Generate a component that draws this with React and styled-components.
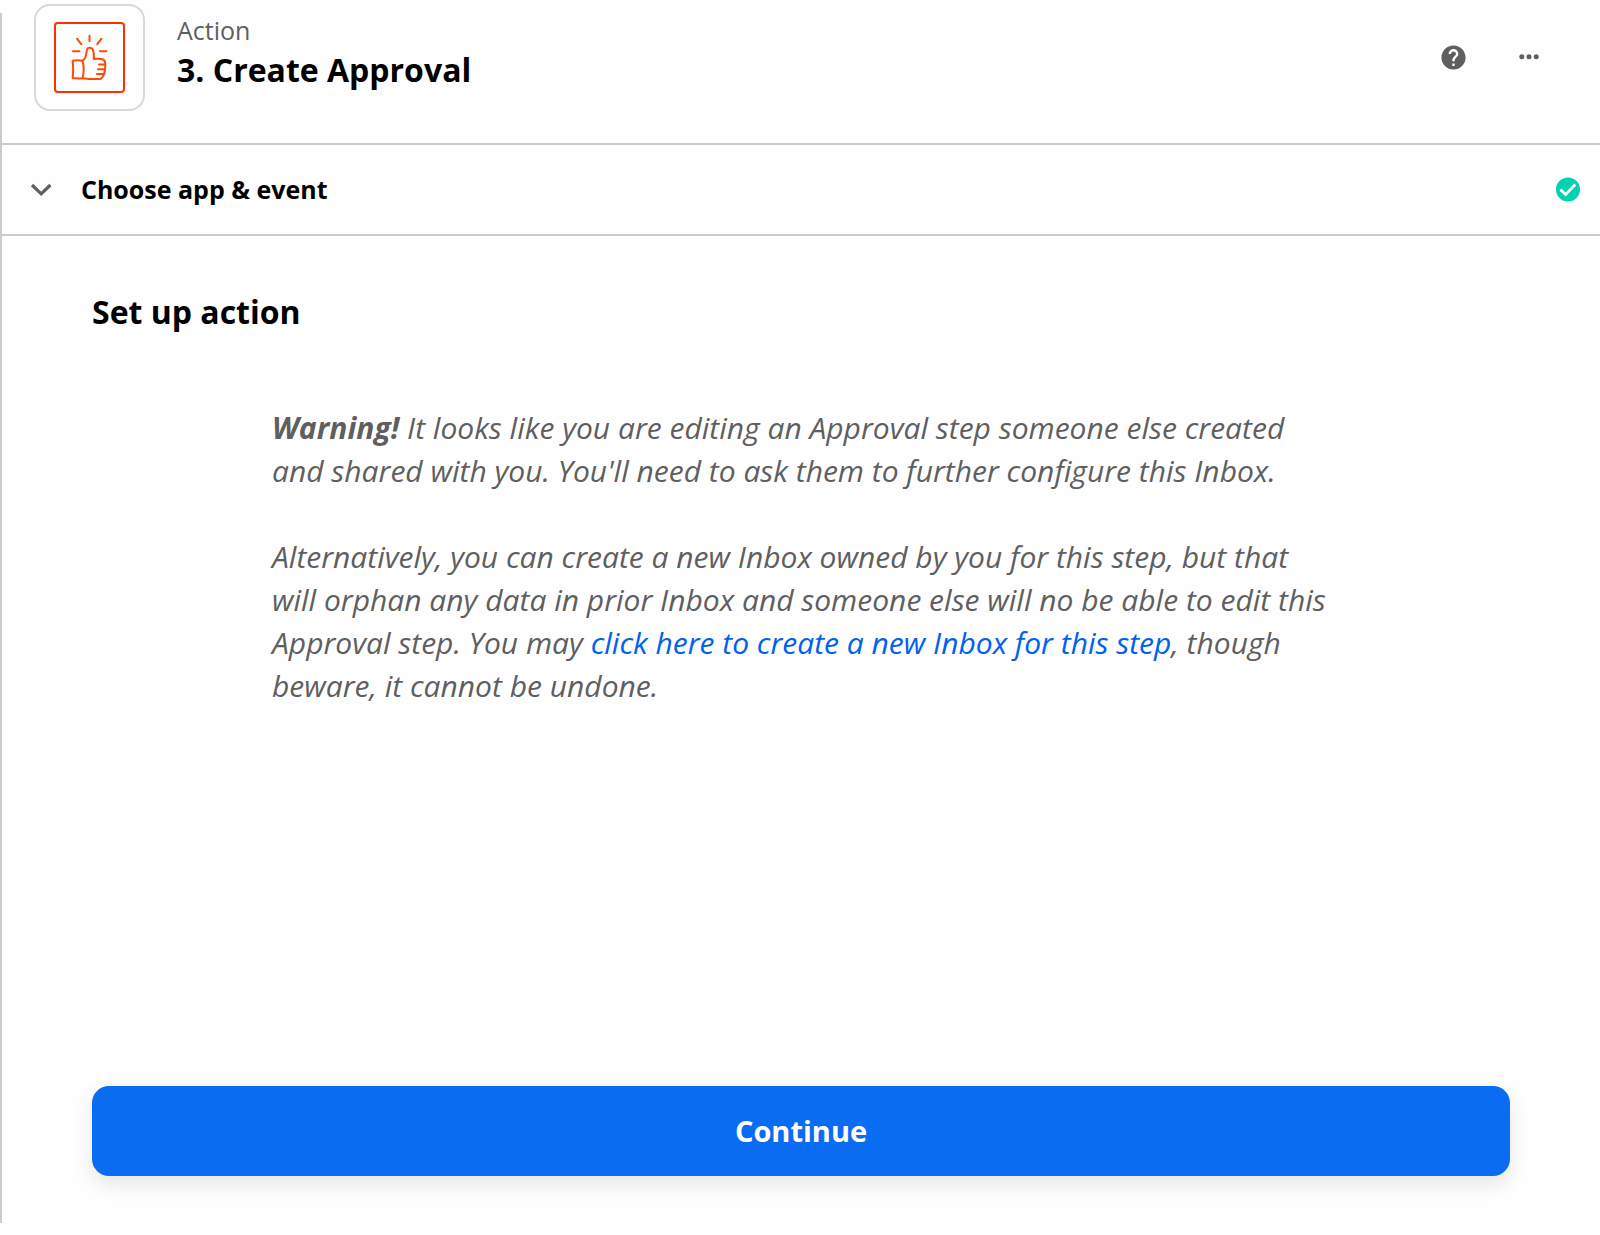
import React, { useState } from "react";
import styled, { createGlobalStyle } from "styled-components";

const colors = {
  black: "#000000",
  gray: "#5f5f5f",
  line: "#cccccc",
  red: "#ff3000",
  orange: "#ff4a00",
  blue: "#0a6cf1",
  link: "#0060f0",
  green: "#00d1b0",
};

const GlobalStyle = createGlobalStyle`
  * {
    box-sizing: border-box;
  }
  body {
    margin: 0;
    background-color: #fefefe;
    color: ${colors.black};
    font-family: "Open Sans", "Noto Sans", sans-serif;
  }
`;

const Panel = styled.div`
  display: flex;
  flex-direction: column;
  min-height: 100vh;
  padding-left: 2px;
  background: linear-gradient(${colors.line}, ${colors.line}) no-repeat;
  background-position: 0 13px;
  background-size: 2px calc(100% - 25px);
`;

const Header = styled.header`
  display: flex;
  align-items: flex-start;
  padding: 4px 50px 32px 32px;
  border-bottom: 2px solid ${colors.line};
`;

const AppIcon = styled.div`
  display: flex;
  align-items: center;
  justify-content: center;
  width: 111px;
  height: 107px;
  border: 2px solid #d8d8d8;
  border-radius: 16px;
`;

const Titles = styled.div`
  display: flex;
  flex: 1;
  flex-direction: column;
  gap: 1px;
  padding: 9px 0 0 32px;
`;

const Kind = styled.div`
  color: ${colors.gray};
  font-size: 25px;
  line-height: 34px;
`;

const Title = styled.h1`
  margin: 0;
  font-size: 32px;
  font-weight: 700;
  line-height: 44px;
`;

const Tools = styled.div`
  display: flex;
  align-self: center;
  gap: 32px;
`;

const IconButton = styled.button`
  display: flex;
  align-items: center;
  justify-content: center;
  width: 43px;
  height: 43px;
  padding: 0;
  border: none;
  background: none;
  color: ${colors.gray};
  cursor: pointer;
`;

const SectionToggle = styled.button`
  display: flex;
  align-items: center;
  gap: 28px;
  width: 100%;
  padding: 27px 20px 28px 27px;
  border: none;
  border-bottom: 2px solid ${colors.line};
  background: none;
  color: ${colors.black};
  font-family: inherit;
  font-size: 25px;
  font-weight: 700;
  line-height: 34px;
  text-align: left;
  cursor: pointer;
`;

const SectionName = styled.span`
  flex: 1;
`;

const Content = styled.main`
  display: flex;
  flex: 1;
  flex-direction: column;
  padding: 54px 90px 59px;
`;

const Heading = styled.h2`
  margin: 0;
  font-size: 32px;
  font-weight: 700;
  line-height: 44px;
`;

const Notice = styled.div`
  margin: 72px 176px 43px 180px;
  color: ${colors.gray};
  font-size: 30px;
  font-style: italic;
  line-height: 43px;

  p {
    margin: 0 0 43px;
  }
`;

const NoticeLink = styled.a`
  color: ${colors.link};
  text-decoration: none;
`;

const ContinueButton = styled.button`
  height: 90px;
  margin-top: auto;
  padding: 0 0 2px;
  border: none;
  border-radius: 17px;
  background-color: ${colors.blue};
  box-shadow: 0 8px 20px rgba(0, 0, 0, 0.1);
  color: white;
  font-family: inherit;
  font-size: 29px;
  font-weight: 700;
  cursor: pointer;
`;

function ApprovalIcon() {
  return (
    <svg
      width="71"
      height="71"
      viewBox="0 0 71 71"
      fill="none"
      stroke={colors.orange}
      strokeWidth="2"
      strokeLinecap="round"
      strokeLinejoin="round"
      aria-hidden="true"
    >
      <rect x="1" y="1" width="69" height="69" rx="3" stroke={colors.red} />
      <g transform="translate(-0.5 -0.8)">
        <path d="M36 14.5v5.5M23.5 17.5l4.2 5.5M48 17.5l-4.200 5.500M19.500 30h6.500M46.500 30h6.500" />
        <path d="M19.200 39.500q5-.8 9.800 0q2.400 8.500 0 17.500q-5 .5-9.800-.2q1-8.700 0-17.300z" />
        <path d="M29 39.500c4-1.500 3.500-7.500 4.500-11c.8-3 5-2.500 6 .2c1 3 1.200 6 .7 9c3.500-.2 7-.4 9.300.6c2.500 1.200 2.600 4 2.300 6.700c-.2 5-.8 9.500-4.300 12.500c-5.500.8-12.500.2-18.500-.5" />
        <path d="M45.500 43.200h6M44.500 48h7M43.500 52.700h6.500" />
      </g>
    </svg>
  );
}

function HelpIcon() {
  return (
    <svg width="29" height="29" viewBox="0 0 24 24" fill="currentColor" aria-hidden="true">
      <path d="M12 2C6.480 2 2 6.480 2 12s4.480 10 10 10 10-4.480 10-10S17.520 2 12 2zm1 17h-2v-2h2v2zm2.070-7.750l-.9.920C13.450 12.900 13 13.500 13 15h-2v-.5c0-1.100.450-2.100 1.170-2.830l1.240-1.260c.370-.360.590-.860.590-1.410 0-1.100-.9-2-2-2s-2 .9-2 2H8c0-2.210 1.790-4 4-4s4 1.790 4 4c0 .880-.360 1.680-.930 2.250z" />
    </svg>
  );
}

function MoreIcon() {
  return (
    <svg width="22" height="7" viewBox="0 0 22 7" fill="currentColor" aria-hidden="true">
      <circle cx="3.800" cy="2.800" r="2.500" />
      <circle cx="11" cy="2.800" r="2.500" />
      <circle cx="18.200" cy="2.800" r="2.500" />
    </svg>
  );
}

function ChevronIcon() {
  return (
    <svg width="24" height="16" viewBox="0 0 24 16" fill="none" aria-hidden="true">
      <path d="M3 4l9.200 8.800l9.200-8.800" stroke={colors.gray} strokeWidth="3.200" />
    </svg>
  );
}

function CheckIcon() {
  return (
    <svg width="24" height="26" viewBox="0 0 24 26" fill="none" role="img" aria-label="Complete">
      <circle cx="12" cy="13.500" r="12" fill={colors.green} />
      <path d="M4.400 13.600l5.200 4.900l9.600-10" stroke="white" strokeWidth="2.800" />
    </svg>
  );
}

function App() {
  const [open, setOpen] = useState(false);

  return (
    <>
      <GlobalStyle />
      <Panel>
        <Header>
          <AppIcon>
            <ApprovalIcon />
          </AppIcon>
          <Titles>
            <Kind>Action</Kind>
            <Title>3. Create Approval</Title>
          </Titles>
          <Tools>
            <IconButton type="button" aria-label="Help">
              <HelpIcon />
            </IconButton>
            <IconButton type="button" aria-label="More options">
              <MoreIcon />
            </IconButton>
          </Tools>
        </Header>
        <SectionToggle
          type="button"
          aria-expanded={open}
          onClick={() => setOpen(!open)}
        >
          <ChevronIcon />
          <SectionName>Choose app &amp; event</SectionName>
          <CheckIcon />
        </SectionToggle>
        <Content>
          <Heading>Set up action</Heading>
          <Notice>
            <p>
              <strong>Warning!</strong> It looks like you are editing an
              Approval step someone else created and shared with you. You'll
              need to ask them to further configure this Inbox.
            </p>
            <p>
              Alternatively, you can create a new Inbox owned by you for this
              step, but that will orphan any data in prior Inbox and someone
              else will no be able to edit this Approval step. You may{" "}
              <NoticeLink href="#new-inbox">
                click here to create a new Inbox for this step
              </NoticeLink>
              , though beware, it cannot be undone.
            </p>
          </Notice>
          <ContinueButton type="button">Continue</ContinueButton>
        </Content>
      </Panel>
    </>
  );
}

export default App;
